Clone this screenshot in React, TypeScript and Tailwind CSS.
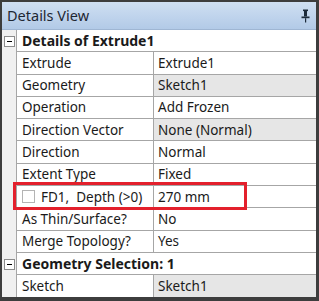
import React from "react";

type Row = {
  label: string;
  value?: string;
  header?: boolean;
  gray?: boolean;
  boxed?: boolean;
};

const rows: Row[] = [
  { label: "Details of Extrude1", header: true },
  { label: "Extrude", value: "Extrude1" },
  { label: "Geometry", value: "Sketch1", gray: true },
  { label: "Operation", value: "Add Frozen" },
  { label: "Direction Vector", value: "None (Normal)", gray: true },
  { label: "Direction", value: "Normal" },
  { label: "Extent Type", value: "Fixed" },
  { label: "FD1,  Depth (>0)", value: "270 mm", boxed: true },
  { label: "As Thin/Surface?", value: "No" },
  { label: "Merge Topology?", value: "Yes" },
  { label: "Geometry Selection: 1", header: true },
  { label: "Sketch", value: "Sketch1", gray: true },
];

function PinIcon() {
  return (
    <svg width="9" height="14" viewBox="0 0 9 14" fill="none">
      <rect x="2" y="0.5" width="5" height="1.6" fill="#1b2a3a" />
      <rect x="3" y="2" width="3" height="5.5" fill="#1b2a3a" />
      <rect x="0.5" y="7.5" width="8" height="1.7" fill="#1b2a3a" />
      <rect x="4" y="9.2" width="1.2" height="4.3" fill="#1b2a3a" />
    </svg>
  );
}

function MinusBox() {
  return (
    <div className="flex h-[11px] w-[11px] items-center justify-center border border-[#8c8c8c] bg-white">
      <div className="h-px w-[5px] bg-black" />
    </div>
  );
}

export default function App() {
  return (
    <div
      className="relative h-[301px] w-[319px] overflow-hidden border-t-2 border-l-2 border-r-[3px] border-b-[4px] border-[#3d3d3d] bg-white text-[13.5px] text-[#1a1a1a]"
      style={{ fontFamily: '"Noto Sans", "Open Sans", sans-serif' }}
    >
      {/* title bar */}
      <div className="flex h-[28px] items-center justify-between border-b border-[#9fb6d3] bg-gradient-to-b from-[#cfdff2] to-[#b2cae7] pl-[5px] pr-[6px]">
        <span className="text-[14.5px] text-[#1e2733]">Details View</span>
        <PinIcon />
      </div>

      {rows.map((r) => (
        <div key={r.label} className="flex h-[22.3px]">
          <div className="flex w-[15px] shrink-0 items-center justify-center border-r border-[#a6a6a6] bg-[#f0f0f0]">
            {r.header ? <MinusBox /> : null}
          </div>
          {r.header ? (
            <div className="flex flex-1 items-center border-b border-[#a6a6a6] pl-[5px] text-[14px] font-bold">
              {r.label}
            </div>
          ) : (
            <>
              <div className="flex w-[137px] shrink-0 items-center whitespace-pre border-b border-r border-[#a6a6a6] pl-[5px]">
                {r.boxed ? (
                  <span className="mr-[6px] inline-block h-[13px] w-[13px] border border-[#b4b4b4] bg-white" />
                ) : null}
                {r.label}
              </div>
              <div
                className={
                  r.gray
                    ? "flex flex-1 items-center border-b border-[#a6a6a6] bg-[#e6e6e6] pl-[4px]"
                    : "flex flex-1 items-center border-b border-[#a6a6a6] pl-[4px]"
                }
              >
                {r.value}
              </div>
            </>
          )}
        </div>
      ))}

      {/* red highlight around FD1 row */}
      <div className="pointer-events-none absolute left-[11px] top-[180px] h-[28px] w-[234px] border-[3px] border-[#e3202c]" />
    </div>
  );
}
